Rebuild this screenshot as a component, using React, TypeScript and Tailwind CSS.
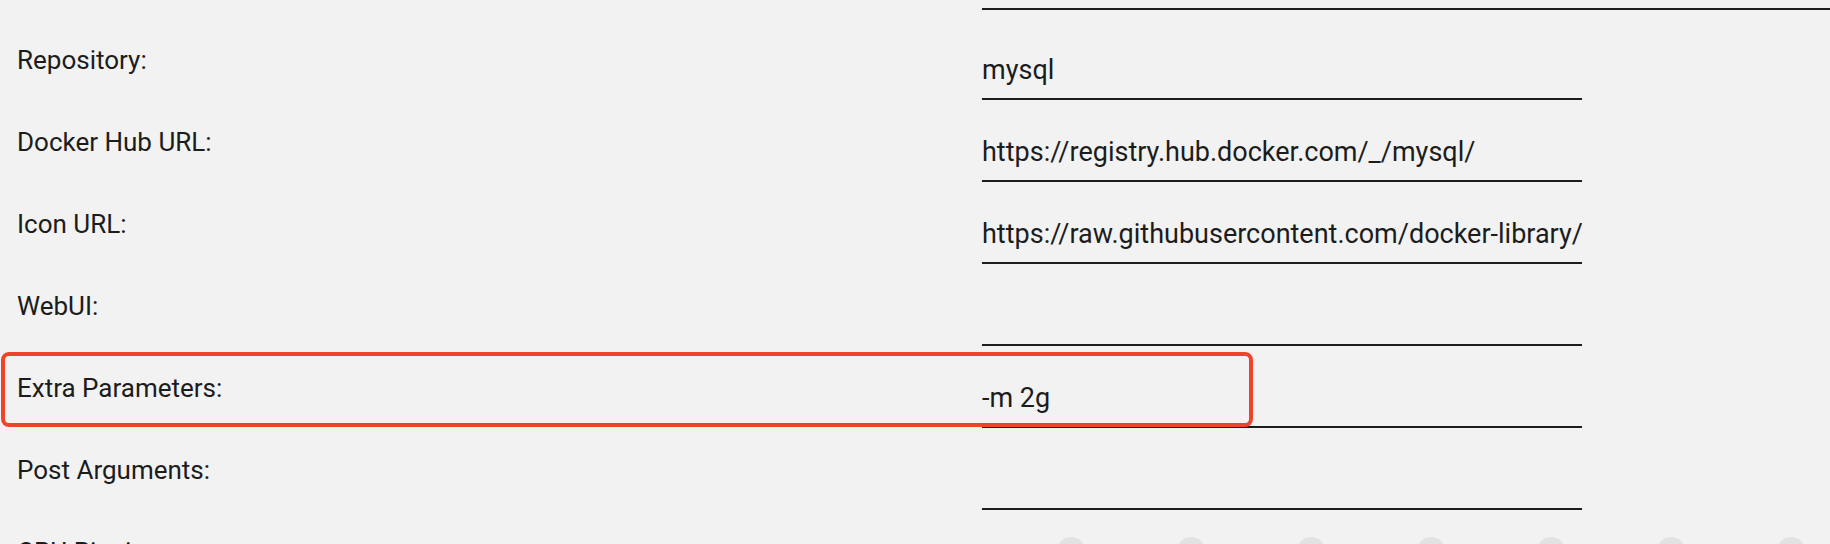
const fields = [
  { label: "Repository:", value: "mysql" },
  { label: "Docker Hub URL:", value: "https://registry.hub.docker.com/_/mysql/" },
  {
    label: "Icon URL:",
    value:
      "https://raw.githubusercontent.com/docker-library/docs/master/mysql/logo.png",
  },
  { label: "WebUI:", value: "" },
  { label: "Extra Parameters:", value: "-m 2g", highlight: true },
  { label: "Post Arguments:", value: "" },
];

const cores = [0, 1, 2, 3, 4, 5, 6];

export default function App() {
  return (
    <div
      className="h-[544px] overflow-hidden bg-[#f2f2f2] text-[#1c1c1c]"
      style={{ fontFamily: "Roboto, 'Liberation Sans', sans-serif" }}>
      {/* bottom edge of the field above */}
      <div className="ml-[982px] h-[10px] border-b-2 border-[#1c1c1c]"></div>

      <div className="mt-[8px] pl-[17px]">
        {fields.map((field) => (
          <div key={field.label} className="relative flex h-[82px]">
            <label className="w-[965px] pt-[27px] text-[26px] leading-[30px]">
              {field.label}
            </label>
            <div className="w-[600px] pt-[37px]">
              <input
                readOnly
                defaultValue={field.value}
                className="block w-full border-b-2 border-[#1c1c1c] bg-transparent pb-[13px] text-[27px] leading-[30px] text-[#1c1c1c] outline-none"
              />
            </div>
            {field.highlight && (
              <div className="absolute left-[-16px] top-[6px] h-[75px] w-[1252px] rounded-[8px] border-[4px] border-[#ef4429]"></div>
            )}
          </div>
        ))}

        <div className="flex h-[82px]">
          <label className="w-[965px] pt-[27px] text-[26px] leading-[30px]">
            CPU Pinning:
          </label>
          <div className="flex gap-[92px] pl-[75px] pt-[27px]">
            {cores.map((c) => (
              <span
                key={c}
                className="block h-[28px] w-[28px] rounded-full bg-[#e2e2e2]"></span>
            ))}
          </div>
        </div>
      </div>
    </div>
  );
}
